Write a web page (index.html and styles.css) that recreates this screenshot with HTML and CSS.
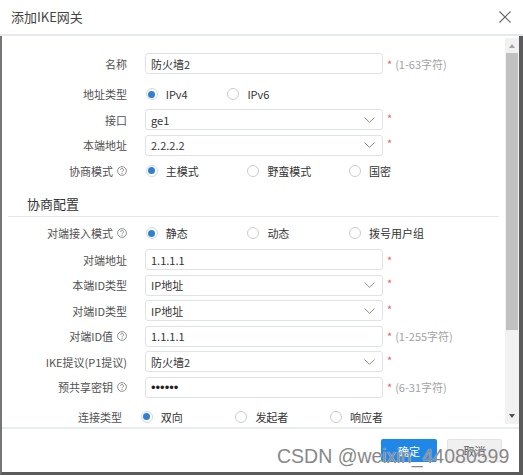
FILE: index.html
```html
<!DOCTYPE html>
<html lang="zh">
<head>
<meta charset="utf-8">
<title>添加IKE网关</title>
<link rel="stylesheet" href="styles.css">
</head>
<body>
<div class="dialog">
  <div class="header">
    <span class="title">添加IKE网关</span>
    <svg class="close" width="12" height="12" viewBox="0 0 12 12"><path d="M0.5 0.5 L11.5 11.5 M11.5 0.5 L0.5 11.5" stroke="#6b6b6b" stroke-width="1.2" fill="none"/></svg>
  </div>
  <div class="frame">
    <div class="body">
      <div class="form">
        <div class="row">
          <div class="label">名称</div>
          <div class="ctrl"><div class="input">防火墙2</div><span class="req">*</span><span class="hint">(1-63字符)</span></div>
        </div>
        <div class="row r-gap5">
          <div class="label">地址类型</div>
          <div class="ctrl radios w81">
            <div class="opt"><span class="radio on"></span>IPv4</div>
            <div class="opt"><span class="radio"></span>IPv6</div>
          </div>
        </div>
        <div class="row">
          <div class="label">接口</div>
          <div class="ctrl"><div class="input select">ge1<svg class="chev" width="11" height="6" viewBox="0 0 11 6"><path d="M0.5 0.5 L5.5 5.3 L10.5 0.5" stroke="#8a8a8a" stroke-width="1" fill="none"/></svg></div><span class="req sel">*</span></div>
        </div>
        <div class="row">
          <div class="label">本端地址</div>
          <div class="ctrl"><div class="input select">2.2.2.2<svg class="chev" width="11" height="6" viewBox="0 0 11 6"><path d="M0.5 0.5 L5.5 5.3 L10.5 0.5" stroke="#8a8a8a" stroke-width="1" fill="none"/></svg></div><span class="req sel">*</span></div>
        </div>
        <div class="row">
          <div class="label">协商模式<svg class="help" width="10" height="10" viewBox="0 0 10 10"><circle cx="5" cy="5" r="4.4" stroke="#777" stroke-width="0.8" fill="none"/><path d="M3.6 3.9 A1.45 1.45 0 1 1 5.6 5.2 C5.1 5.45 5 5.8 5 6.3" stroke="#777" stroke-width="0.8" fill="none"/><circle cx="5" cy="7.5" r="0.55" fill="#777"/></svg></div>
          <div class="ctrl radios w101">
            <div class="opt"><span class="radio on"></span>主模式</div>
            <div class="opt"><span class="radio"></span>野蛮模式</div>
            <div class="opt"><span class="radio"></span>国密</div>
          </div>
        </div>

        <div class="section">协商配置</div>

        <div class="row r-gap3">
          <div class="label">对端接入模式<svg class="help" width="10" height="10" viewBox="0 0 10 10"><circle cx="5" cy="5" r="4.4" stroke="#777" stroke-width="0.8" fill="none"/><path d="M3.6 3.9 A1.45 1.45 0 1 1 5.6 5.2 C5.1 5.45 5 5.8 5 6.3" stroke="#777" stroke-width="0.8" fill="none"/><circle cx="5" cy="7.5" r="0.55" fill="#777"/></svg></div>
          <div class="ctrl radios w101">
            <div class="opt"><span class="radio on"></span>静态</div>
            <div class="opt"><span class="radio"></span>动态</div>
            <div class="opt"><span class="radio"></span>拨号用户组</div>
          </div>
        </div>
        <div class="row r-gap1">
          <div class="label">对端地址</div>
          <div class="ctrl"><div class="input">1.1.1.1</div><span class="req">*</span></div>
        </div>
        <div class="row">
          <div class="label">本端ID类型</div>
          <div class="ctrl"><div class="input select">IP地址<svg class="chev" width="11" height="6" viewBox="0 0 11 6"><path d="M0.5 0.5 L5.5 5.3 L10.5 0.5" stroke="#8a8a8a" stroke-width="1" fill="none"/></svg></div><span class="req sel">*</span></div>
        </div>
        <div class="row">
          <div class="label">对端ID类型</div>
          <div class="ctrl"><div class="input select">IP地址<svg class="chev" width="11" height="6" viewBox="0 0 11 6"><path d="M0.5 0.5 L5.5 5.3 L10.5 0.5" stroke="#8a8a8a" stroke-width="1" fill="none"/></svg></div><span class="req sel">*</span></div>
        </div>
        <div class="row">
          <div class="label">对端ID值<svg class="help" width="10" height="10" viewBox="0 0 10 10"><circle cx="5" cy="5" r="4.4" stroke="#777" stroke-width="0.8" fill="none"/><path d="M3.6 3.9 A1.45 1.45 0 1 1 5.6 5.2 C5.1 5.45 5 5.8 5 6.3" stroke="#777" stroke-width="0.8" fill="none"/><circle cx="5" cy="7.5" r="0.55" fill="#777"/></svg></div>
          <div class="ctrl"><div class="input">1.1.1.1</div><span class="req">*</span><span class="hint">(1-255字符)</span></div>
        </div>
        <div class="row">
          <div class="label">IKE提议(P1提议)</div>
          <div class="ctrl"><div class="input select">防火墙2<svg class="chev" width="11" height="6" viewBox="0 0 11 6"><path d="M0.5 0.5 L5.5 5.3 L10.5 0.5" stroke="#8a8a8a" stroke-width="1" fill="none"/></svg></div><span class="req sel">*</span></div>
        </div>
        <div class="row">
          <div class="label">预共享密钥<svg class="help" width="10" height="10" viewBox="0 0 10 10"><circle cx="5" cy="5" r="4.4" stroke="#777" stroke-width="0.8" fill="none"/><path d="M3.6 3.9 A1.45 1.45 0 1 1 5.6 5.2 C5.1 5.45 5 5.8 5 6.3" stroke="#777" stroke-width="0.8" fill="none"/><circle cx="5" cy="7.5" r="0.55" fill="#777"/></svg></div>
          <div class="ctrl"><div class="input"><span class="pwd">••••••</span></div><span class="req">*</span><span class="hint">(6-31字符)</span></div>
        </div>
        <div class="row r-gap4">
          <div class="label narrow">连接类型</div>
          <div class="ctrl radios w94">
            <div class="opt"><span class="radio on"></span>双向</div>
            <div class="opt"><span class="radio"></span>发起者</div>
            <div class="opt"><span class="radio"></span>响应者</div>
          </div>
        </div>
      </div>
      <div class="scrollbar">
        <div class="sb-btn"><span class="arrow-up"></span></div>
        <div class="thumb"></div>
        <div class="sb-fill"></div>
        <div class="sb-btn down"><span class="arrow-down"></span></div>
      </div>
    </div>
    <div class="footer">
      <div class="btn primary">确定</div>
      <div class="btn cancel">取消</div>
    </div>
  </div>
  <div class="watermark">CSDN @weixin_44080599</div>
</div>
</body>
</html>
```

FILE: styles.css
```css
html, body {
  margin: 0;
  padding: 0;
  background: #fff;
}
body {
  font-family: "Noto Sans CJK SC", "Noto Sans", sans-serif;
}
.dialog {
  position: relative;
  width: 523px;
  height: 475px;
  overflow: hidden;
  background: #fff;
}
.header {
  height: 34px;
  border-bottom: 2px solid #e6eaee;
  display: flex;
  align-items: center;
  justify-content: space-between;
  padding: 0 12px 0 11px;
}
.title {
  font-size: 13px;
  color: #444;
  line-height: 20px;
}
.frame {
  height: 439px;
  box-sizing: border-box;
  border-left: 2px solid #767676;
  border-right: 4px solid #5b5b5b;
  border-bottom: 3px solid #5b5b5b;
  display: flex;
  flex-direction: column;
}
.body {
  height: 391px;
  display: flex;
  flex-shrink: 0;
}
.form {
  flex: 1;
  padding-top: 14.75px;
}
.row {
  display: flex;
  align-items: center;
  height: 25.5px;
}
.r-gap5 { margin-top: 5px; }
.r-gap3 { margin-top: 3.25px; }
.r-gap1 { margin-top: 1px; }
.r-gap4 { margin-top: 4px; }
.label {
  width: 125px;
  flex-shrink: 0;
  display: flex;
  justify-content: flex-end;
  align-items: center;
  gap: 4px;
  font-size: 11px;
  color: #505050;
  white-space: nowrap;
}
.label.narrow {
  width: 120px;
}
.help {
  flex-shrink: 0;
}
.ctrl {
  margin-left: 18px;
  display: flex;
  align-items: center;
}
.input {
  width: 238px;
  height: 21px;
  box-sizing: border-box;
  border: 1px solid #dfe3e7;
  border-radius: 3px;
  display: flex;
  align-items: center;
  padding: 0 7px 0 5px;
  font-size: 11px;
  color: #333;
}
.chev {
  margin-left: auto;
}
.pwd {
  font-family: "Liberation Sans", Arial, sans-serif;
  font-size: 13px;
  color: #222;
}
.req {
  color: #f25d5d;
  font-size: 11px;
  margin-left: 4px;
  line-height: 16px;
}
.req.sel {
  position: relative;
  top: -2px;
}
.hint {
  color: #a3a3a3;
  font-size: 11px;
  margin-left: 3px;
}
.radios .opt {
  display: flex;
  align-items: center;
  gap: 8px;
  font-size: 11px;
  color: #333;
  margin-left: 0.7px;
}
.w81 .opt { width: 81px; }
.w101 .opt { width: 101px; }
.w94 .opt { width: 94px; }
.radio {
  width: 12px;
  height: 12px;
  box-sizing: border-box;
  border: 1px solid #c9cdd2;
  border-radius: 50%;
  background: #fff;
  display: flex;
  align-items: center;
  justify-content: center;
  flex-shrink: 0;
}
.radio.on {
  border-color: #d4d8dc;
}
.radio.on::after {
  content: "";
  width: 7px;
  height: 7px;
  border-radius: 50%;
  background: #2f7fd2;
}
.section {
  margin: 11px 6px 0 6px;
  padding: 0 0 1.75px 19px;
  line-height: 20px;
  font-size: 13px;
  color: #333;
  border-bottom: 1px solid #e4e6e8;
}
.scrollbar {
  width: 14px;
  margin-top: 2px;
  height: 386px;
  background: #f1f1f1;
  display: flex;
  flex-direction: column;
  align-items: center;
  flex-shrink: 0;
}
.sb-btn {
  height: 15px;
  width: 14px;
  display: flex;
  align-items: center;
  justify-content: center;
}
.sb-btn.down {
  height: 17px;
}
.arrow-up {
  width: 0;
  height: 0;
  border-left: 3.5px solid transparent;
  border-right: 3.5px solid transparent;
  border-bottom: 4px solid #a3a3a3;
}
.arrow-down {
  width: 0;
  height: 0;
  border-left: 3.5px solid transparent;
  border-right: 3.5px solid transparent;
  border-top: 4px solid #505050;
}
.thumb {
  width: 12px;
  height: 277px;
  background: #c1c1c1;
}
.sb-fill {
  flex: 1;
}
.footer {
  flex: 1;
  border-top: 2px solid #e9edf0;
  display: flex;
  justify-content: flex-end;
  align-items: flex-start;
  gap: 10px;
  padding: 10px 17px 0 0;
}
.btn {
  height: 23px;
  box-sizing: border-box;
  border-radius: 2px;
  font-size: 11px;
  display: flex;
  align-items: center;
  justify-content: center;
}
.primary {
  width: 56px;
  background: #1e87e8;
  color: #fff;
}
.cancel {
  width: 55px;
  background: #f0f0f0;
  border: 1px solid #e3e3e3;
  color: #555;
}
.watermark {
  position: absolute;
  left: 277px;
  top: 446px;
  font-family: "Liberation Sans", Arial, sans-serif;
  font-size: 19.5px;
  line-height: 20px;
  color: #888;
  text-shadow: 0 0 1px #fff;
  white-space: nowrap;
}
```
